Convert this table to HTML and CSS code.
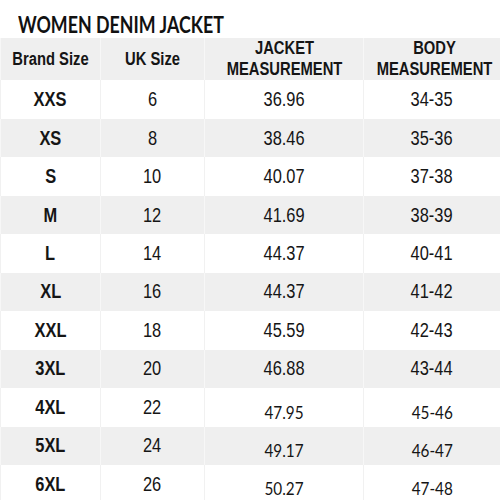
FILE: index.html
```html
<!DOCTYPE html>
<html>
<head>
<meta charset="utf-8">
<link rel="stylesheet" href="styles.css">
</head>
<body>
<table class="chart">
  <colgroup>
    <col class="c1"><col class="c2"><col class="c3"><col class="c4">
  </colgroup>
  <tr class="title-row">
    <td colspan="3" class="title"><span class="tw">WOMEN DENIM JACKET</span></td>
    <td class="blank"></td>
  </tr>
  <tr class="head alt">
    <th><span class="n">Brand Size</span></th>
    <th><span class="n">UK Size</span></th>
    <th><span class="n">JACKET<br>MEASUREMENT</span></th>
    <th><span class="n">BODY<br>MEASUREMENT</span></th>
  </tr>
  <tr><td class="size"><span class="n">XXS</span></td><td><span class="n">6</span></td><td><span class="n">36.96</span></td><td><span class="n">34-35</span></td></tr>
  <tr class="alt"><td class="size"><span class="n">XS</span></td><td><span class="n">8</span></td><td><span class="n">38.46</span></td><td><span class="n">35-36</span></td></tr>
  <tr><td class="size"><span class="n">S</span></td><td><span class="n">10</span></td><td><span class="n">40.07</span></td><td><span class="n">37-38</span></td></tr>
  <tr class="alt"><td class="size"><span class="n">M</span></td><td><span class="n">12</span></td><td><span class="n">41.69</span></td><td><span class="n">38-39</span></td></tr>
  <tr><td class="size"><span class="n">L</span></td><td><span class="n">14</span></td><td><span class="n">44.37</span></td><td><span class="n">40-41</span></td></tr>
  <tr class="alt"><td class="size"><span class="n">XL</span></td><td><span class="n">16</span></td><td><span class="n">44.37</span></td><td><span class="n">41-42</span></td></tr>
  <tr><td class="size"><span class="n">XXL</span></td><td><span class="n">18</span></td><td><span class="n">45.59</span></td><td><span class="n">42-43</span></td></tr>
  <tr class="alt"><td class="size"><span class="n">3XL</span></td><td><span class="n">20</span></td><td><span class="n">46.88</span></td><td><span class="n">43-44</span></td></tr>
  <tr><td class="size"><span class="n">4XL</span></td><td><span class="n">22</span></td><td class="cal"><span class="cw">47.95</span></td><td class="cal"><span class="cw">45-46</span></td></tr>
  <tr class="alt"><td class="size"><span class="n">5XL</span></td><td><span class="n">24</span></td><td class="cal"><span class="cw">49.17</span></td><td class="cal"><span class="cw">46-47</span></td></tr>
  <tr><td class="size"><span class="n">6XL</span></td><td><span class="n">26</span></td><td class="cal"><span class="cw">50.27</span></td><td class="cal"><span class="cw">47-48</span></td></tr>
</table>
</body>
</html>
```
FILE: styles.css
```css
html, body {
  margin: 0;
  padding: 0;
  background: #ffffff;
}

.chart {
  width: 500px;
  height: 500px;
  border-collapse: collapse;
  table-layout: fixed;
  font-family: "Liberation Sans", Arial, sans-serif;
  color: #151515;
}

.c1 { width: 100px; }
.c2 { width: 104px; }
.c3 { width: 159px; }
.c4 { width: 137px; }

.chart tr {
  height: 38.46px;
}

.chart td,
.chart th {
  padding: 0;
  text-align: center;
  vertical-align: middle;
  font-size: 20px;
  font-weight: normal;
  line-height: 21px;
  white-space: nowrap;
  overflow: visible;
  border-left: 1px solid #f1f1f1;
  border-right: 1px solid #f1f1f1;
}

/* Arial Narrow look: condensed Liberation Sans */
.n {
  display: inline-block;
  transform: scaleX(0.82);
  transform-origin: center;
}

.chart tr.alt {
  background: #efefef;
}

.chart tr.alt td,
.chart tr.alt th {
  border-left-color: #f7f7f7;
  border-right-color: #f7f7f7;
}

.title-row td {
  border-color: transparent;
}

.title-row td.blank {
  border-left: 1px solid #ececec;
}

.chart td.title {
  text-align: left;
  vertical-align: bottom;
  padding: 0 0 3px 17px;
  font-family: Lato, "Liberation Sans", sans-serif;
  font-weight: bold;
  font-size: 22px;
  color: #111111;
}

.tw {
  display: inline-block;
  transform: scaleX(0.81);
  transform-origin: left center;
}

.head th {
  font-weight: bold;
  font-size: 18px;
  line-height: 21px;
}

.chart td.size {
  font-weight: bold;
}

.chart td.cal {
  vertical-align: bottom;
  padding-bottom: 4px;
  font-family: Lato, "Liberation Sans", sans-serif;
  font-size: 18px;
}

.cw {
  display: inline-block;
  transform: scaleX(0.85);
  transform-origin: center;
}
```
